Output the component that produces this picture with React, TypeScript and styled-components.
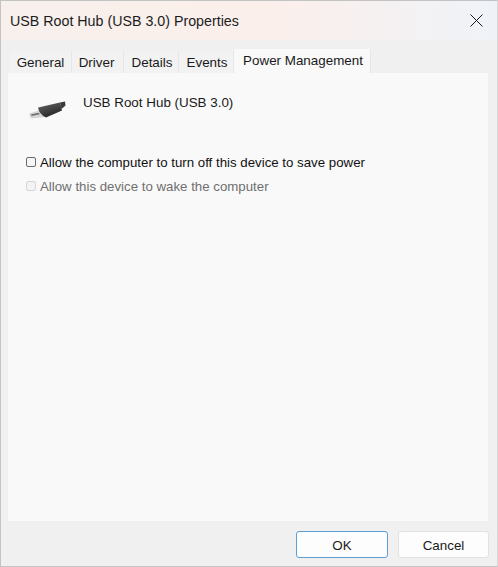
import { createGlobalStyle, styled } from 'styled-components';

const GlobalStyle = createGlobalStyle`
  html, body {
    margin: 0;
    padding: 0;
    background: #f0f0f0;
  }
`;

const Window = styled.div`
  width: 498px;
  height: 567px;
  box-sizing: border-box;
  display: flex;
  flex-direction: column;
  background: #f0f0f0;
  border: 1px solid #c4c4c4;
  border-right-color: #d8d8d8;
  font-family: 'Liberation Sans', Arial, sans-serif;
  font-size: 13.4px;
  color: #1a1a1a;
`;

const TitleBar = styled.div`
  height: 39px;
  flex: none;
  display: flex;
  align-items: center;
  justify-content: space-between;
  padding: 0 14px 0 9px;
  background: linear-gradient(90deg, #f7f0ec 0%, #fbefeb 55%, #eff3f8 100%);
`;

const Title = styled.div`
  font-size: 14.25px;
  color: #1c1c1c;
`;

const TabBar = styled.div`
  display: flex;
  align-items: flex-end;
  height: 33px;
  flex: none;
  padding-left: 9px;
`;

const Tab = styled.div<{ $active?: boolean; $width: number; $nudge?: number }>`
  width: ${({ $width }) => $width}px;
  height: ${({ $active }) => ($active ? 24 : 22)}px;
  box-sizing: border-box;
  display: flex;
  align-items: center;
  justify-content: center;
  padding-bottom: ${({ $active }) => ($active ? 2 : 0)}px;
  padding-left: ${({ $nudge = 0 }) => Math.max($nudge, 0)}px;
  padding-right: ${({ $nudge = 0 }) => Math.max(-$nudge, 0)}px;
  background: ${({ $active }) => ($active ? '#f9f9f9' : '#f2f2f2')};
  border-right: 1px solid #e6e6e6;
  color: #1a1a1a;
`;

const Panel = styled.div`
  flex: 1;
  margin: 0 9px 0 7px;
  padding: 20px 0 0 18px;
  background: #f9f9f9;
`;

const DeviceRow = styled.div`
  display: flex;
  align-items: flex-start;
  gap: 17px;
  height: 61px;
`;

const DeviceIcon = styled.svg`
  width: 40px;
  height: 22px;
  margin-top: 6px;
  flex: none;
  filter: blur(0.5px);
`;

const DeviceName = styled.div`
  line-height: 20px;
`;

const OptionList = styled.div`
  display: flex;
  flex-direction: column;
  gap: 8px;
  font-size: 13.28px;
`;

const Option = styled.label<{ $disabled?: boolean }>`
  display: flex;
  align-items: center;
  gap: 4px;
  height: 16px;
  color: ${({ $disabled }) => ($disabled ? '#6f6f6f' : '#111111')};
`;

const Box = styled.span<{ $disabled?: boolean }>`
  width: 10px;
  height: 10px;
  box-sizing: border-box;
  flex: none;
  border: 1px solid ${({ $disabled }) => ($disabled ? '#d6d6d6' : '#6a6a6a')};
  border-radius: 2px;
  background: ${({ $disabled }) => ($disabled ? '#f3f3f3' : '#f6f6f6')};
`;

const Footer = styled.div`
  flex: none;
  height: 45px;
  box-sizing: border-box;
  display: flex;
  justify-content: flex-end;
  align-items: flex-start;
  gap: 10px;
  padding: 10px 8px 0 0;
`;

const Button = styled.button<{ $primary?: boolean }>`
  width: ${({ $primary }) => ($primary ? 92 : 91)}px;
  height: 27px;
  box-sizing: border-box;
  padding: 1px 0 0;
  font: inherit;
  color: #1a1a1a;
  background: #fdfdfd;
  border: 1px solid ${({ $primary }) => ($primary ? '#5a9fd8' : '#e2e2e2')};
  border-radius: 3px;
`;

export default function App() {
  return (
    <>
      <GlobalStyle />
      <Window>
        <TitleBar>
          <Title>USB Root Hub (USB 3.0) Properties</Title>
          <svg width="13" height="13" viewBox="0 0 13 13" fill="none" stroke="#1a1a1a" strokeWidth="1">
            <path d="M0.5 0.5 L12.5 12.5 M12.5 0.5 L0.5 12.5" />
          </svg>
        </TitleBar>
        <TabBar>
          <Tab $width={62}>General</Tab>
          <Tab $width={52} $nudge={-2}>Driver</Tab>
          <Tab $width={55} $nudge={2}>Details</Tab>
          <Tab $width={55} $nudge={2}>Events</Tab>
          <Tab $active $width={137} $nudge={2}>Power Management</Tab>
        </TabBar>
        <Panel>
          <DeviceRow>
            <DeviceIcon viewBox="0 0 40 22">
              <defs>
                <linearGradient id="plug" x1="0" y1="0" x2="0.5" y2="1">
                  <stop offset="0" stopColor="#b0b0b0" />
                  <stop offset="0.35" stopColor="#505050" />
                  <stop offset="1" stopColor="#262626" />
                </linearGradient>
              </defs>
              <path d="M3 14.5 L15 11 L19 18 L5 19.5 Z" fill="#d4d4d4" />
              <path d="M5 15.5 L13 13.8 L13.5 15.3 L5.5 17 Z" fill="#6a6a6a" />
              <path d="M12 8.5 L34 3.5 L36 11.5 L20 18.5 Q13 15 12 8.5 Z" fill="url(#plug)" />
              <path d="M34 3.5 L39 2.5 L39.5 6.5 L35.5 10 Z" fill="#3a3a3a" />
            </DeviceIcon>
            <DeviceName>USB Root Hub (USB 3.0)</DeviceName>
          </DeviceRow>
          <OptionList>
            <Option>
              <Box />
              Allow the computer to turn off this device to save power
            </Option>
            <Option $disabled>
              <Box $disabled />
              Allow this device to wake the computer
            </Option>
          </OptionList>
        </Panel>
        <Footer>
          <Button $primary>OK</Button>
          <Button>Cancel</Button>
        </Footer>
      </Window>
    </>
  );
}
